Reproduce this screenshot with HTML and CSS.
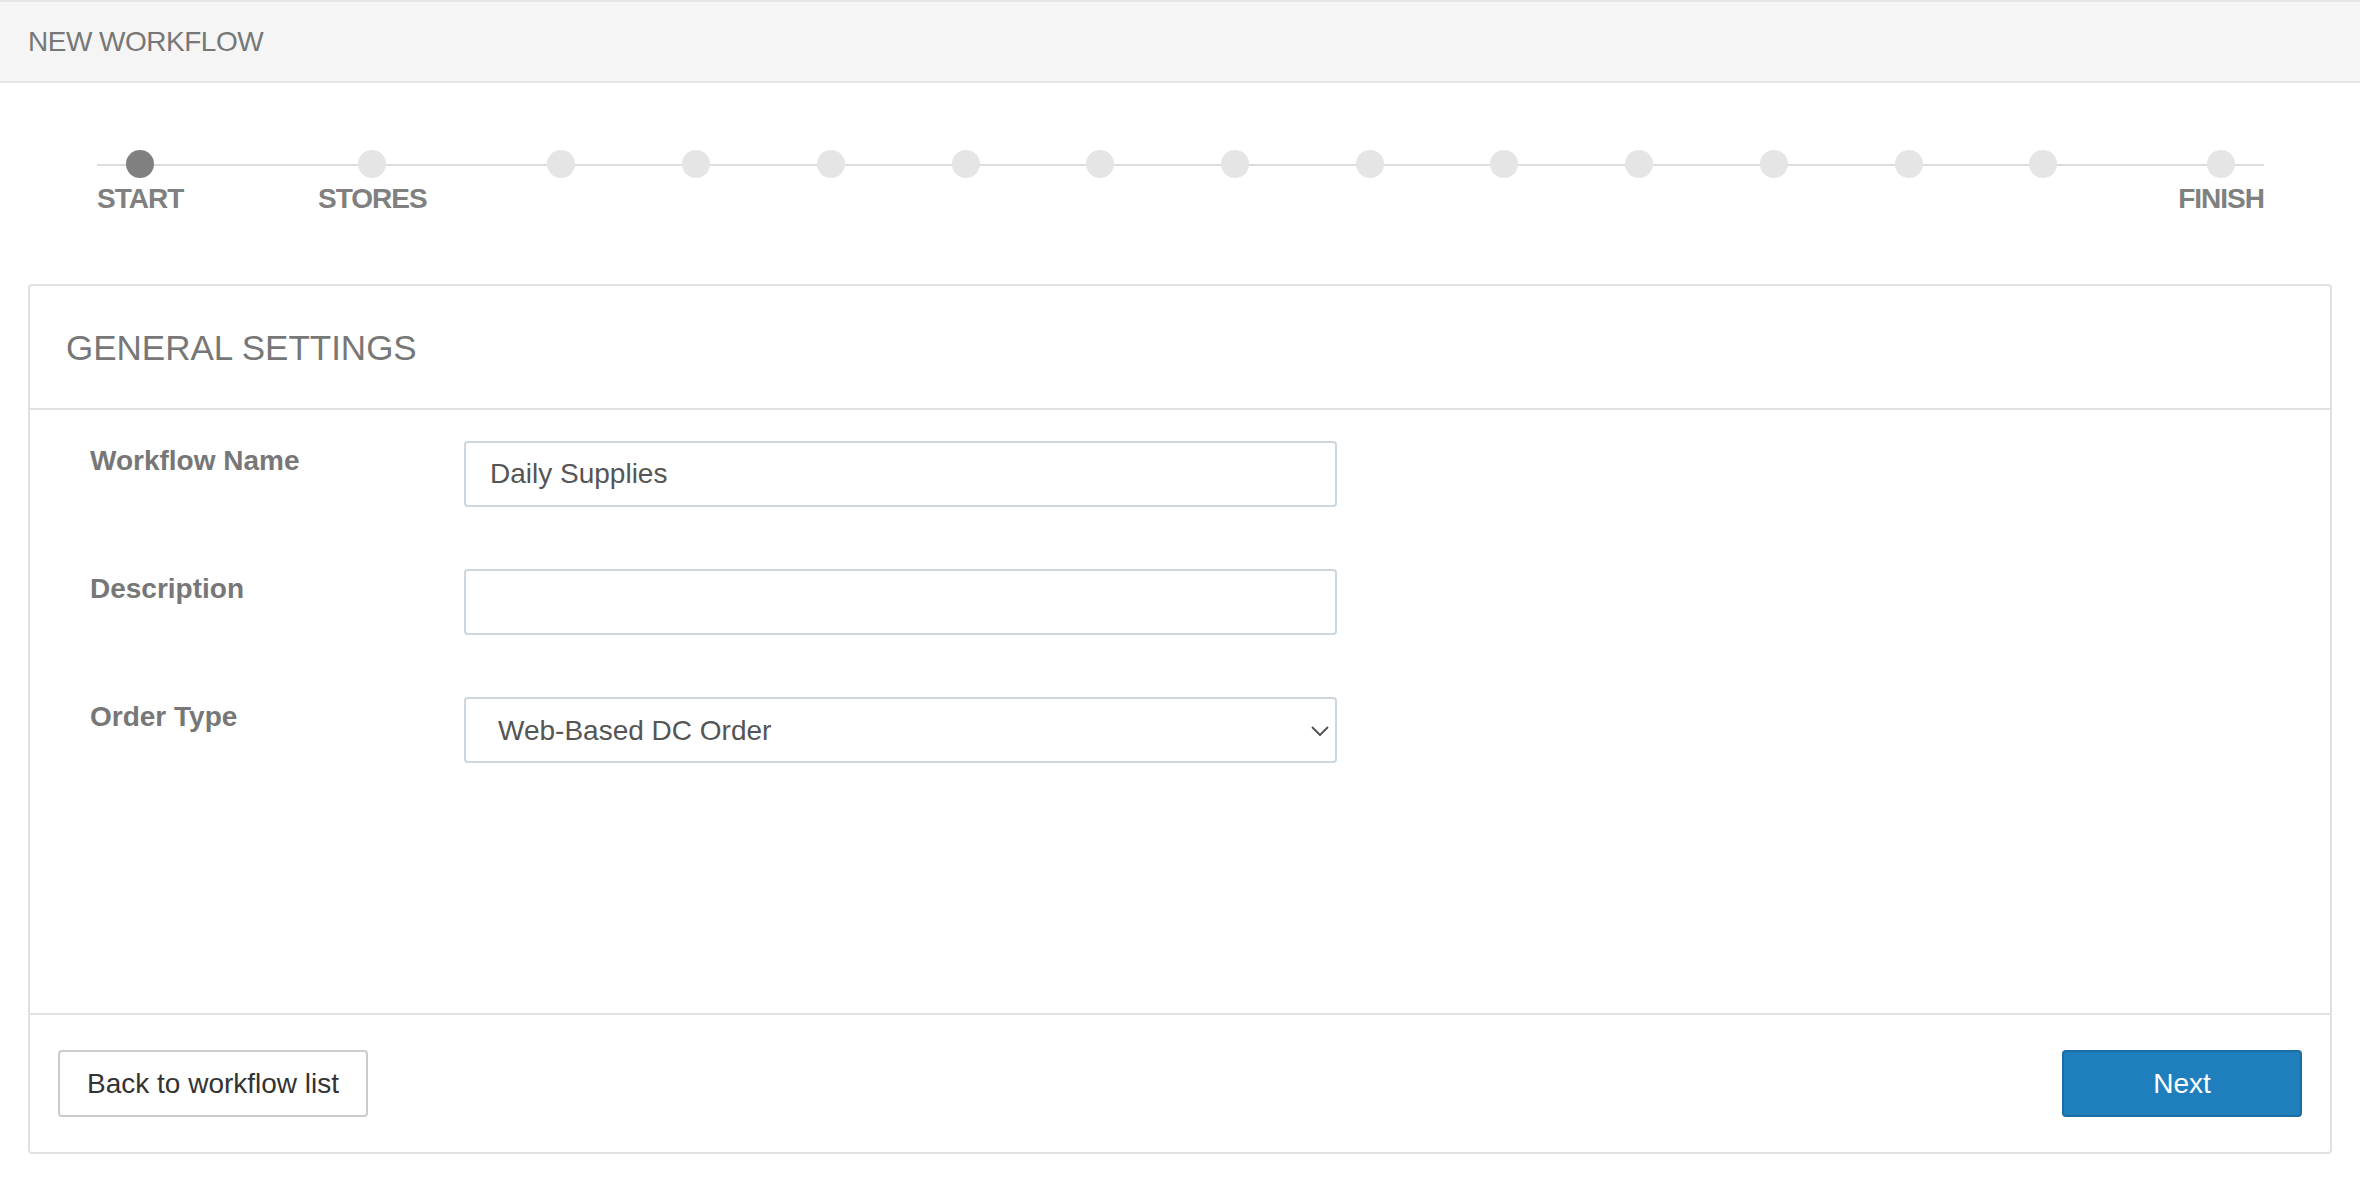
FILE: index.html
```html
<!DOCTYPE html>
<html lang="en">
<head>
<meta charset="utf-8">
<title>New Workflow</title>
<link rel="stylesheet" href="styles.css">
</head>
<body>
<header class="topbar">NEW WORKFLOW</header>
<main class="page">
  <ol class="stepper">
    <li class="step active"><span class="dot"></span><span class="step-label">START</span></li>
    <li class="step"><span class="dot"></span><span class="step-label">STORES</span></li>
    <li class="step empty"><span class="dot"></span></li>
    <li class="step empty"><span class="dot"></span></li>
    <li class="step empty"><span class="dot"></span></li>
    <li class="step empty"><span class="dot"></span></li>
    <li class="step empty"><span class="dot"></span></li>
    <li class="step empty"><span class="dot"></span></li>
    <li class="step empty"><span class="dot"></span></li>
    <li class="step empty"><span class="dot"></span></li>
    <li class="step empty"><span class="dot"></span></li>
    <li class="step empty"><span class="dot"></span></li>
    <li class="step empty"><span class="dot"></span></li>
    <li class="step empty"><span class="dot"></span></li>
    <li class="step"><span class="dot"></span><span class="step-label">FINISH</span></li>
  </ol>

  <section class="panel">
    <div class="panel-head"><h2 class="panel-title">GENERAL SETTINGS</h2></div>
    <div class="panel-body">
      <div class="form-row">
        <label class="form-label" for="wf-name">Workflow Name</label>
        <input class="form-input" id="wf-name" type="text" value="Daily Supplies">
      </div>
      <div class="form-row">
        <label class="form-label" for="wf-desc">Description</label>
        <input class="form-input" id="wf-desc" type="text" value="">
      </div>
      <div class="form-row">
        <label class="form-label" for="wf-type">Order Type</label>
        <div class="select-wrap">
          <select class="form-select" id="wf-type">
            <option>Web-Based DC Order</option>
          </select>
          <svg class="chevron" width="18" height="10" viewBox="0 0 18 10" aria-hidden="true"><path d="M1 1 L9 9 L17 1" fill="none" stroke="#555" stroke-width="2"/></svg>
        </div>
      </div>
    </div>
    <div class="panel-foot">
      <button class="btn btn-default" type="button">Back to workflow list</button>
      <button class="btn btn-primary" type="button">Next</button>
    </div>
  </section>
</main>
</body>
</html>
```

FILE: styles.css
```css
* { box-sizing: border-box; }

html, body {
  margin: 0;
  padding: 0;
  background: #fff;
  font-family: "Liberation Sans", Helvetica, Arial, sans-serif;
  color: #333;
}

.topbar {
  height: 83px;
  border-top: 2px solid #e6e6e6;
  border-bottom: 2px solid #e6e6e6;
  background: #f5f5f5;
  padding: 0 28px;
  font-size: 28px;
  line-height: 79px;
  letter-spacing: -0.5px;
  color: #777;
}

.page {
  padding: 0 28px;
}

.stepper {
  list-style: none;
  margin: 67px 68px 0 69px;
  padding: 0;
  position: relative;
  display: flex;
  justify-content: space-between;
  align-items: flex-start;
}

.stepper::before {
  content: "";
  position: absolute;
  left: 0;
  right: 0;
  top: 14px;
  height: 2px;
  background: #dcdcdc;
}

.step {
  flex: none;
  display: flex;
  flex-direction: column;
  align-items: center;
  position: relative;
}

.step.empty {
  width: 0;
}

.dot {
  flex: none;
  width: 28px;
  height: 28px;
  border-radius: 50%;
  background: #e5e5e5;
  position: relative;
  z-index: 1;
}

.step.active .dot {
  background: #808080;
}

.step-label {
  margin-top: 5px;
  font-size: 28px;
  line-height: 32px;
  font-weight: bold;
  letter-spacing: -1px;
  color: #808080;
  white-space: nowrap;
}

.panel {
  margin-top: 69px;
  border: 2px solid #e1e1e1;
  border-radius: 4px;
  background: #fff;
}

.panel-head {
  padding: 41px 36px 39px;
  border-bottom: 2px solid #e1e1e1;
}

.panel-title {
  margin: 0;
  font-size: 35px;
  line-height: 42px;
  font-weight: normal;
  color: #777;
}

.panel-body {
  min-height: 603px;
  padding: 31px 60px 0;
  display: flex;
  flex-direction: column;
  gap: 62px;
}

.form-row {
  display: grid;
  grid-template-columns: 374px 873px;
  align-items: start;
}

.form-label {
  font-size: 28px;
  line-height: 40px;
  font-weight: bold;
  color: #777;
}

.form-input,
.form-select {
  display: block;
  width: 100%;
  height: 66px;
  margin: 0;
  border: 2px solid #ccd6de;
  border-radius: 4px;
  background: #fff;
  font-family: "Liberation Sans", Helvetica, Arial, sans-serif;
  font-size: 28px;
  color: #555;
  outline: none;
}

.form-input {
  padding: 0 24px;
}

.select-wrap {
  position: relative;
}

.form-select {
  -webkit-appearance: none;
  appearance: none;
  padding: 0 40px 0 32px;
}

.chevron {
  position: absolute;
  right: 8px;
  top: 29px;
  pointer-events: none;
}

.panel-foot {
  border-top: 2px solid #e1e1e1;
  padding: 35px 28px;
  display: flex;
  justify-content: space-between;
  align-items: center;
}

.btn {
  height: 67px;
  margin: 0;
  border-radius: 4px;
  font-family: "Liberation Sans", Helvetica, Arial, sans-serif;
  font-size: 28px;
  cursor: pointer;
}

.btn-default {
  padding: 0 27px;
  border: 2px solid #cccccc;
  background: #fff;
  color: #333;
}

.btn-primary {
  width: 240px;
  padding: 0;
  border: 2px solid #1b6da6;
  background: #1f7fbd;
  color: #fff;
}
```
